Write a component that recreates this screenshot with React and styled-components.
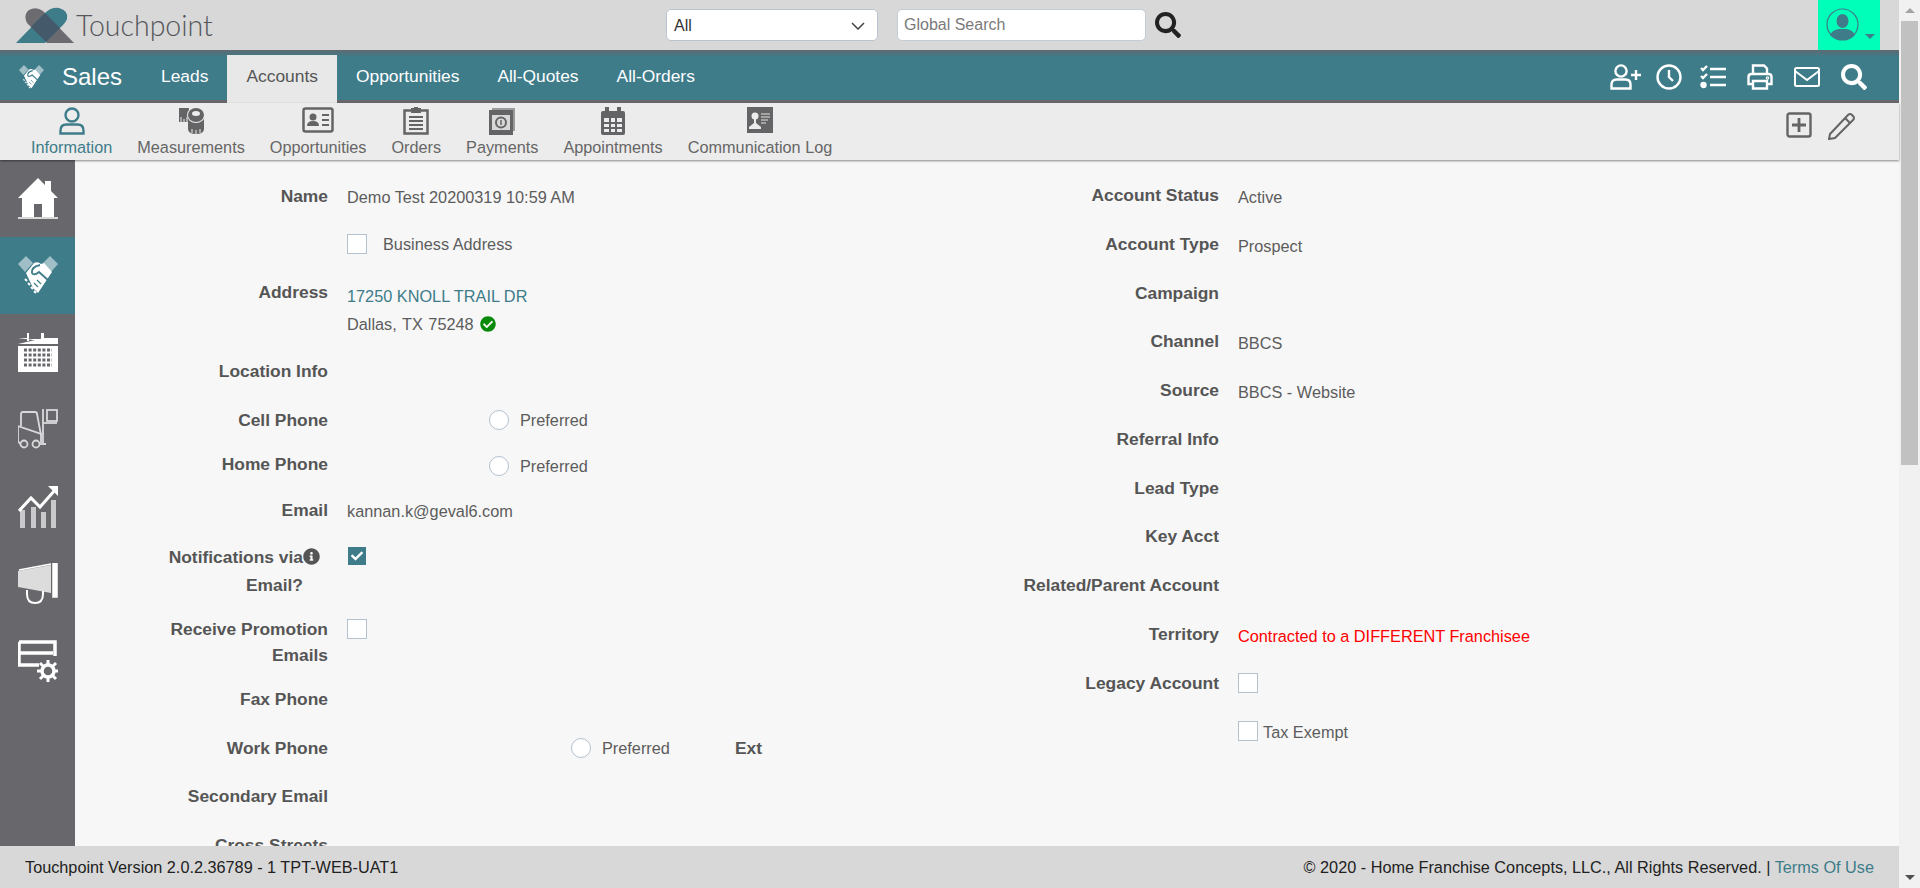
import React from 'react'
import styled, { createGlobalStyle } from 'styled-components'
import { FaSearch, FaCheckCircle, FaInfoCircle, FaCheck } from 'react-icons/fa'

const TEAL = '#3e7c8a'
const GREY = '#67676c'

const Global = createGlobalStyle`
  html, body { margin: 0; padding: 0; height: 100%; overflow: hidden; }
  body { font-family: 'Liberation Sans', Arial, sans-serif; color: #555; }
  * { box-sizing: border-box; }
`

const Screen = styled.div`
  display: flex;
  height: 888px;
  width: 1920px;
`
const Page = styled.div`
  flex: 1;
  min-width: 0;
  display: flex;
  flex-direction: column;
  background: #f7f7f7;
`
const ScrollRail = styled.div`
  width: 21px;
  background: #f1f1f1;
  display: flex;
  flex-direction: column;
  align-items: center;
`
const ScrollArrow = styled.div`
  height: 21px;
  display: flex;
  align-items: center;
  justify-content: center;
  &::before {
    content: '';
    border-left: 5px solid transparent;
    border-right: 5px solid transparent;
    ${p => (p.$down ? 'border-top: 5px solid #505050;' : 'border-bottom: 5px solid #a3a3a3;')}
  }
`
const ScrollThumb = styled.div`
  width: 17px;
  height: 444px;
  background: #c1c1c1;
  margin-bottom: auto;
`

const TopBar = styled.header`
  height: 50px;
  flex: none;
  background: #d8d8d8;
  display: flex;
  align-items: stretch;
`
const LogoBox = styled.div`
  width: 666px;
  padding: 7px 0 0 15px;
  display: flex;
  align-items: flex-start;
  gap: 1px;
`
const LogoText = styled.span`
  font: 300 28.5px/36px Lato, sans-serif;
  color: #54565a;
`
const SearchGroup = styled.div`
  display: flex;
  align-items: center;
`
const SelectBox = styled.div`
  width: 212px;
  height: 32px;
  background: #fff;
  border: 1px solid #b9c4d0;
  border-radius: 5px;
  padding: 2px 12px 0 7px;
  display: flex;
  align-items: center;
  justify-content: space-between;
  font-size: 16px;
  color: #333;
`
const SearchInput = styled.div`
  width: 249px;
  height: 32px;
  margin-left: 19px;
  background: #fff;
  border: 1px solid #c4ccd4;
  border-radius: 5px;
  padding: 0 6px;
  display: flex;
  align-items: center;
  font-size: 16px;
  color: #7a7a7a;
`
const SearchButton = styled.div`
  margin-left: 9px;
  display: flex;
  color: #222;
  font-size: 26px;
`
const UserBox = styled.div`
  width: 62px;
  margin: 0 19px 0 auto;
  background: #00ffb8;
  padding: 8px 0 0 8px;
  position: relative;
  &::after {
    content: '';
    position: absolute;
    left: 47px;
    top: 34px;
    border-left: 5px solid transparent;
    border-right: 5px solid transparent;
    border-top: 5px solid ${TEAL};
  }
`

const NavBar = styled.nav`
  height: 53px;
  flex: none;
  display: flex;
  align-items: stretch;
  background: linear-gradient(#5f6a72, ${TEAL} 7px);
  border-bottom: 3px solid ${GREY};
  padding-left: 19px;
  color: #fff;
`
const NavTitle = styled.div`
  display: flex;
  align-items: center;
  gap: 18px;
  width: 123px;
  font-size: 24px;
  margin-top: 4px;
`
const NavTab = styled.div`
  margin-top: 5px;
  margin-bottom: ${p => (p.$active ? '-3px' : '0')};
  padding: 0 19px ${p => (p.$active ? '5px' : '2px')};
  font-size: 17.4px;
  display: flex;
  align-items: center;
  background: ${p => (p.$active ? '#e8e8e8' : 'transparent')};
  color: ${p => (p.$active ? '#555' : '#fff')};
`
const NavTools = styled.div`
  margin-left: auto;
  padding: 3px 32px 0 0;
  display: flex;
  align-items: center;
  gap: 21px;
  svg:nth-child(1) { margin-right: -7px; }
  svg:nth-child(2) { margin-right: -3px; }
`

const SubBar = styled.div`
  height: 57px;
  flex: none;
  background: #ececec;
  box-shadow: 0 1px 2px rgba(0, 0, 0, 0.45);
  position: relative;
  z-index: 2;
  display: flex;
  padding-left: 31px;
  gap: 25px;
`
const SubItem = styled.div`
  display: flex;
  flex-direction: column;
  align-items: center;
  padding-top: 4px;
  font-size: 16.25px;
  line-height: 20px;
  color: ${p => (p.$active ? TEAL : '#666')};
`
const SubIcon = styled.div`
  height: 30px;
  display: flex;
  align-items: flex-start;
`
const SubTools = styled.div`
  margin-left: auto;
  padding: 9px 43px 0 0;
  display: flex;
  gap: 16px;
  align-items: flex-start;
`

const Body = styled.div`
  flex: 1;
  min-height: 0;
  display: flex;
  overflow: hidden;
`
const SideBar = styled.aside`
  width: 75px;
  flex: none;
  background: ${GREY};
  display: flex;
  flex-direction: column;
`
const SideItem = styled.div`
  height: 77px;
  flex: none;
  display: flex;
  align-items: center;
  justify-content: center;
  background: ${p => (p.$active ? TEAL : 'transparent')};
`
const FormArea = styled.main`
  flex: 1;
  min-width: 0;
  padding-top: 12px;
  display: flex;
  overflow: hidden;
`
const FormColumn = styled.section`
  width: ${p => p.$w}px;
  flex: none;
  margin-top: ${p => p.$shift || 0}px;
  --label: ${p => p.$label}px;
`
const Row = styled.div`
  height: ${p => p.$h}px;
  display: grid;
  grid-template-columns: var(--label) 1fr;
  column-gap: 19px;
`
const Label = styled.div`
  padding-top: 11px;
  padding-right: ${p => p.$inset || 0}px;
  text-align: right;
  font-weight: 700;
  font-size: 17.4px;
  line-height: ${p => p.$lh || 26}px;
  color: #555;
`
const Value = styled.div`
  padding-top: ${p => p.$top ?? 12}px;
  padding-left: ${p => p.$left || 0}px;
  display: flex;
  align-items: ${p => (p.$block ? 'flex-start' : 'center')};
  flex-direction: ${p => (p.$block ? 'column' : 'row')};
  height: ${p => (p.$block ? 'auto' : `${(p.$top ?? 12) + 26}px`)};
  font-size: 16.3px;
  line-height: ${p => (p.$block ? 28 : 26)}px;
  color: ${p => (p.$danger ? '#ff0000' : '#5c5c5c')};
`
const TealLink = styled.span`
  color: ${TEAL};
`
const CityLine = styled.span`
  word-spacing: 1px;
`
const Box = styled.span`
  width: 20px;
  height: 20px;
  flex: none;
  border: 1px solid #b4c1cf;
  background: #fff;
  margin-right: ${p => p.$gap || 0}px;
`
const Radio = styled.span`
  width: 20px;
  height: 20px;
  flex: none;
  border: 1px solid #b4c1cf;
  border-radius: 50%;
  background: #fff;
  margin-right: 11px;
`
const Ticked = styled.span`
  width: 18px;
  height: 18px;
  margin-left: 1px;
  background: ${TEAL};
  color: #fff;
  display: flex;
  align-items: center;
  justify-content: center;
  font-size: 12px;
`
const ExtLabel = styled.span`
  margin-left: 65px;
  font-weight: 700;
  font-size: 17.4px;
  color: #555;
`
const InfoIcon = styled(FaInfoCircle)`
  font-size: 17px;
  vertical-align: -2px;
  margin-right: -17px;
  color: #555;
`
const CheckIcon = styled(FaCheckCircle)`
  font-size: 16px;
  color: #0a8a0a;
  margin-left: 6px;
  vertical-align: -2px;
`
const TaxText = styled.span`
  padding-top: 2px;
`

const Footer = styled.footer`
  height: 42px;
  flex: none;
  background: #d8d8d8;
  position: relative;
  z-index: 2;
  display: flex;
  align-items: center;
  justify-content: space-between;
  padding: 0 25px;
  font-size: 16.25px;
  color: #222;
`

const Logo = () => (
  <svg width="60" height="38" viewBox="0 0 60 38">
    <path d="M12 16Q8 8 14 3Q21 -1 28 4L59 36H32Z" fill="#6b6b70" />
    <path d="M1 36L30 6Q36 0 44 1Q54 4 52 12Q51 15 48 18L30 36Z" fill={TEAL} />
    <path d="M30 6L45 21L31 35L16 20Z" fill="#44596a" />
  </svg>
)

const Handshake = ({ size }) => (
  <svg width={size} height={size} viewBox="0 0 40 40">
    <path d="M0 8L8 0L15 7L7 16ZM40 8L32 0L25 7L33 16Z" fill="#fff" opacity="0.5" />
    <path d="M8 17L16 7Q20 5 23 8L26 7L34 16L26 28L20 37L15 32Z" fill="#fff" />
    <path d="M22 9Q13 11 14 17Q16 20 21 16L31 25" fill="none" stroke={TEAL} strokeWidth="1.800" />
    <path d="M19 24l4 4M16 27l4 4" stroke={TEAL} strokeWidth="1.200" />
    <path d="M7 23l2 2M10 27l2 2M13 31l2 2M16 35l2 2" stroke="#fff" strokeWidth="2" />
  </svg>
)

const stroke = { fill: 'none', stroke: '#fff', strokeWidth: 2.4 }

const NavIcons = () => (
  <>
    <svg width="32" height="26" viewBox="0 0 32 26" {...stroke}>
      <circle cx="11" cy="7" r="5.600" />
      <path d="M1.500 24.500v-4q0-5 5-5h9q5 0 5 5v4Z" />
      <path d="M21 11h10M26 6v10" />
    </svg>
    <svg width="26" height="26" viewBox="0 0 26 26" {...stroke}>
      <circle cx="13" cy="13" r="11.500" />
      <path d="M13 6v7l4 4" />
    </svg>
    <svg width="26" height="26" viewBox="0 0 26 26" {...stroke}>
      <path d="M1 4l2 2 4-4M1 12l2 2 4-4M10 5h16M10 13h16M10 21h16" />
      <circle cx="3.500" cy="21" r="2" fill="#fff" />
    </svg>
    <svg width="26" height="26" viewBox="0 0 26 26" {...stroke}>
      <path d="M6 11V1.500h11l3 3V11M6 20H1.500v-7q0-3 3-3h17q3 0 3 3v7H20" />
      <path d="M6 17h14v7.500H6Z" />
      <circle cx="20.500" cy="14" r="0.6" />
    </svg>
    <svg width="26" height="20" viewBox="0 0 26 20" fill="none" stroke="#fff" strokeWidth="2">
      <rect x="1" y="1" width="24" height="18" rx="1.500" />
      <path d="M1 4l12 9 12-9" />
    </svg>
    <FaSearch size={26} color="#fff" />
  </>
)

const ink = '#646466'

const subIcons = {
  person: (
    <svg width="26" height="28" viewBox="0 0 26 28" fill="none" stroke={TEAL} strokeWidth="2.400">
      <circle cx="13" cy="8" r="6.500" />
      <path d="M1.500 26.500v-3q0-6 6-6h11q6 0 6 6v3Z" />
    </svg>
  ),
  tape: (
    <svg width="26" height="28" viewBox="0 0 26 28">
      <path d="M1 1h10v14H1Z" fill={ink} />
      <path d="M3 10v5M6 12v3M9 10v5" stroke="#ececec" />
      <path d="M10 8h16v14q0 5-8 5t-8-5Z" fill={ink} />
      <path d="M14 22v4M18 23v4M22 22v4" stroke="#ececec" />
      <ellipse cx="18" cy="8" rx="9" ry="8" fill="#ececec" />
      <ellipse cx="18" cy="8" rx="8" ry="7" fill={ink} />
      <ellipse cx="18" cy="6.500" rx="4" ry="2.500" fill="#ececec" />
    </svg>
  ),
  card: (
    <svg width="32" height="26" viewBox="0 0 32 26">
      <rect x="1.500" y="1.500" width="29" height="23" rx="2" fill="none" stroke={ink} strokeWidth="2.500" />
      <circle cx="11" cy="10" r="3.500" fill={ink} />
      <path d="M5 19q0-5 6-5t6 5Z" fill={ink} />
      <path d="M20 8h7M20 13h7M20 18h7" stroke={ink} strokeWidth="2" />
    </svg>
  ),
  clipboard: (
    <svg width="26" height="28" viewBox="0 0 26 28">
      <rect x="1.500" y="3.500" width="23" height="23" fill="none" stroke={ink} strokeWidth="2.500" />
      <path d="M8 1h3V0h4v1h3v5H8Z" fill={ink} />
      <path d="M6 10h14M6 14h14M6 18h14M6 22h14" stroke={ink} strokeWidth="2" />
    </svg>
  ),
  bill: (
    <svg width="26" height="28" viewBox="0 0 26 28">
      <path d="M3 1h23v23h-2V3H3Z" fill="#9a9a9c" />
      <rect x="0" y="3" width="24" height="25" fill={ink} />
      <rect x="3" y="8" width="18" height="15" fill="#d8d8d8" />
      <circle cx="12" cy="15.500" r="5" fill="none" stroke={ink} strokeWidth="2" />
      <path d="M12 13v5" stroke={ink} strokeWidth="1.500" />
    </svg>
  ),
  calendar: (
    <svg width="26" height="28" viewBox="0 0 26 28">
      <path d="M1 6q0-2 2-2h20q2 0 2 2v20q0 2-2 2H3q-2 0-2-2Z" fill={ink} />
      <path d="M5 0h4v6H5ZM17 0h4v6h-4Z" fill={ink} />
      <path d="M4 11h5v4H4ZM11 11h4v4h-4ZM17 11h5v4h-5ZM4 17h5v3H4ZM11 17h4v3h-4ZM17 17h5v3h-5ZM4 22h5v3H4ZM11 22h4v3h-4ZM17 22h5v3h-5Z" fill="#ececec" />
    </svg>
  ),
  log: (
    <svg width="26" height="26" viewBox="0 0 26 26">
      <rect width="26" height="26" fill={ink} />
      <circle cx="8" cy="9" r="3.500" fill="#ececec" />
      <path d="M7 12h2v4l5 4v2H2v-2l5-4Z" fill="#ececec" />
      <path d="M14 7h9M14 10h9M14 13h7M14 16h5" stroke="#b8b8b8" strokeWidth="1.600" />
    </svg>
  ),
}

const SideIcon = ({ name }) => {
  const size = { width: 40, height: 42, viewBox: '0 0 40 42' }
  if (name === 'home') {
    return (
      <svg {...size}>
        <path d="M0 20L20 0L27 7V3h6v10l7 7h-4v19H24V26H16v13H4V20Z" fill="#fff" />
        <path d="M0 40h40" stroke="#fff" strokeWidth="1.500" />
      </svg>
    )
  }
  if (name === 'calendar') {
    return (
      <svg {...size}>
        <path d="M0 6h9V1h2v8h-2V7h14V1h3v8h-3M26 6h14v6H0Z" fill="#fff" />
        <path d="M0 14h40v26H0Z" fill="#fff" />
        <path d="M6 18h28M6 23h28M6 28h28M6 33h28" stroke={GREY} strokeWidth="3" strokeDasharray="3 1.600" />
      </svg>
    )
  }
  if (name === 'forklift') {
    return (
      <svg {...size} fill="none" stroke="#d9d9db" strokeWidth="1.800">
        <path d="M3 17V5q0-2 2-2h12q2 0 2 2l4 21" />
        <path d="M0 17l23 8v11" />
        <path d="M0 17v15l2 3" />
        <circle cx="6" cy="35" r="3.500" />
        <circle cx="18" cy="35" r="3.500" />
        <path d="M25 0v35h3" />
        <rect x="29" y="1" width="10" height="11" />
        <path d="M25 14h14" />
      </svg>
    )
  }
  if (name === 'chart') {
    return (
      <svg {...size}>
        <path d="M2 24h5v18H2ZM13 21h5v21h-5ZM23 26h5v16h-5ZM33 14h5v28h-5Z" fill="#c9c9cb" />
        <path d="M1 25L13 12L22 21L37 4" fill="none" stroke="#fff" strokeWidth="3" />
        <path d="M30 0h10v10Z" fill="#fff" />
      </svg>
    )
  }
  if (name === 'megaphone') {
    return (
      <svg {...size}>
        <path d="M0 8L33 2V30L0 24Z" fill="#dcdcdc" />
        <path d="M1 7L33 1M35 0h4v34h-4Z" stroke="#fff" strokeWidth="1.500" fill="#fff" />
        <path d="M9 27v4q0 9 8 9t8-9v-3" fill="none" stroke="#fff" strokeWidth="2" />
      </svg>
    )
  }
  return (
    <svg {...size}>
      <path d="M1 2h36v14M1 2v23h20M1 13h34" fill="none" stroke="#fff" strokeWidth="3.500" />
      <circle cx="30" cy="31" r="6" fill="none" stroke="#fff" strokeWidth="3.500" />
      <path d="M30 20v5M30 37v5M19 31h5M36 31h5M22 23l4 4M34 35l4 4M38 23l-4 4M26 35l-4 4" stroke="#fff" strokeWidth="3" />
    </svg>
  )
}

const tabs = ['Leads', 'Accounts', 'Opportunities', 'All-Quotes', 'All-Orders']
const subItems = [
  ['Information', 'person'],
  ['Measurements', 'tape'],
  ['Opportunities', 'card'],
  ['Orders', 'clipboard'],
  ['Payments', 'bill'],
  ['Appointments', 'calendar'],
  ['Communication Log', 'log'],
]
const sideItems = ['home', 'handshake', 'calendar', 'forklift', 'chart', 'megaphone', 'settings']

const rightRows = [
  ['Account Status', 'Active'],
  ['Account Type', 'Prospect'],
  ['Campaign', ''],
  ['Channel', 'BBCS'],
  ['Source', 'BBCS - Website'],
  ['Referral Info', ''],
  ['Lead Type', ''],
  ['Key Acct', ''],
  ['Related/Parent Account', ''],
]

export default function App () {
  return (
    <Screen>
      <Global />
      <Page>
        <TopBar>
          <LogoBox>
            <Logo />
            <LogoText>Touchpoint</LogoText>
          </LogoBox>
          <SearchGroup>
            <SelectBox>
              All
              <svg width="14" height="8" viewBox="0 0 14 8" fill="none" stroke="#444" strokeWidth="1.500">
                <path d="M1 1l6 6 6-6" />
              </svg>
            </SelectBox>
            <SearchInput>Global Search</SearchInput>
            <SearchButton><FaSearch /></SearchButton>
          </SearchGroup>
          <UserBox>
            <svg width="33" height="33" viewBox="0 0 33 33">
              <circle cx="16.500" cy="16.500" r="15.500" fill="none" stroke={TEAL} strokeWidth="1.200" />
              <ellipse cx="16.500" cy="13" rx="6" ry="7" fill={TEAL} />
              <path d="M4 27q2-5 9-6h7q7 1 9 6q-5 5-12.500 5T4 27Z" fill={TEAL} />
            </svg>
          </UserBox>
        </TopBar>

        <NavBar>
          <NavTitle><Handshake size={25} />Sales</NavTitle>
          {tabs.map(t => <NavTab key={t} $active={t === 'Accounts'}>{t}</NavTab>)}
          <NavTools><NavIcons /></NavTools>
        </NavBar>

        <SubBar>
          {subItems.map(([text, icon], i) => (
            <SubItem key={text} $active={i === 0}>
              <SubIcon>{subIcons[icon]}</SubIcon>
              {text}
            </SubItem>
          ))}
          <SubTools>
            <svg width="26" height="26" viewBox="0 0 26 26" fill="none" stroke={ink} strokeWidth="2.400">
              <rect x="1.500" y="1.500" width="23" height="23" rx="2" />
              <path d="M13 6v14M6 13h14" strokeWidth="2.800" />
            </svg>
            <svg width="28" height="28" viewBox="0 0 28 28" fill="none" stroke={ink} strokeWidth="2">
              <path d="M2 22L20 3q2-2 4 0l1 1q2 2 0 4L7 26l-6 1Z" />
              <path d="M17 6l5 5" />
            </svg>
          </SubTools>
        </SubBar>

        <Body>
          <SideBar>
            {sideItems.map(name => (
              <SideItem key={name} $active={name === 'handshake'}>
                {name === 'handshake' ? <Handshake size={40} /> : <SideIcon name={name} />}
              </SideItem>
            ))}
          </SideBar>
          <FormArea>
            <FormColumn $w={892} $label={253}>
              <Row $h={48}><Label>Name</Label><Value>Demo Test 20200319 10:59 AM</Value></Row>
              <Row $h={48}><Label /><Value $top={11}><Box $gap={16} />Business Address</Value></Row>
              <Row $h={79}>
                <Label>Address</Label>
                <Value $block $top={14}>
                  <TealLink>17250 KNOLL TRAIL DR</TealLink>
                  <CityLine>Dallas, TX 75248<CheckIcon /></CityLine>
                </Value>
              </Row>
              <Row $h={49}><Label>Location Info</Label></Row>
              <Row $h={44}><Label>Cell Phone</Label><Value $top={11} $left={142}><Radio />Preferred</Value></Row>
              <Row $h={46}><Label>Home Phone</Label><Value $top={13} $left={142}><Radio />Preferred</Value></Row>
              <Row $h={46}><Label>Email</Label><Value>kannan.k@geval6.com</Value></Row>
              <Row $h={73}>
                <Label $lh={28} $inset={25}>Notifications via<InfoIcon /><br />Email?</Label>
                <Value $top={11}><Ticked><FaCheck /></Ticked></Value>
              </Row>
              <Row $h={70}><Label>Receive Promotion<br />Emails</Label><Value $top={11}><Box /></Value></Row>
              <Row $h={49}><Label>Fax Phone</Label></Row>
              <Row $h={48}><Label>Work Phone</Label><Value $top={11} $left={224}><Radio />Preferred<ExtLabel>Ext</ExtLabel></Value></Row>
              <Row $h={49}><Label>Secondary Email</Label></Row>
              <Row $h={49}><Label>Cross Streets</Label></Row>
            </FormColumn>
            <FormColumn $w={900} $label={252} $shift={-1}>
              {rightRows.map(([label, value]) => (
                <Row key={label} $h={48.75}><Label>{label}</Label>{value && <Value $top={13}>{value}</Value>}</Row>
              ))}
              <Row $h={48.75}><Label>Territory</Label><Value $danger $top={13}>Contracted to a DIFFERENT Franchisee</Value></Row>
              <Row $h={48.75}><Label>Legacy Account</Label><Value $top={11}><Box /></Value></Row>
              <Row $h={48.75}><Label /><Value $top={11}><Box $gap={5} /><TaxText>Tax Exempt</TaxText></Value></Row>
            </FormColumn>
          </FormArea>
        </Body>

        <Footer>
          <span>Touchpoint Version 2.0.2.36789 - 1 TPT-WEB-UAT1</span>
          <span>© 2020 - Home Franchise Concepts, LLC., All Rights Reserved. | <TealLink>Terms Of Use</TealLink></span>
        </Footer>
      </Page>
      <ScrollRail>
        <ScrollArrow />
        <ScrollThumb />
        <ScrollArrow $down />
      </ScrollRail>
    </Screen>
  )
}
